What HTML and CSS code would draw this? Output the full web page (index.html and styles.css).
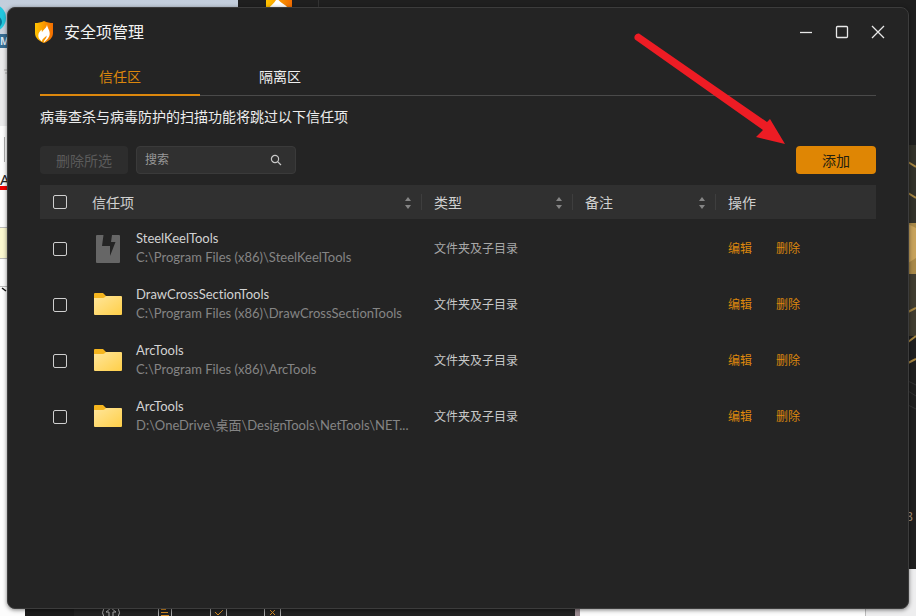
FILE: index.html
```html
<!DOCTYPE html>
<html lang="zh-CN">
<head>
<meta charset="utf-8">
<meta name="viewport" content="width=device-width, initial-scale=1">
<title>安全项管理</title>
<link rel="stylesheet" href="styles.css">
</head>
<body>
<svg class="desktop" viewBox="0 0 916 616" preserveAspectRatio="none" aria-hidden="true">
  <defs>
    <linearGradient id="flame-bg"><stop offset="0" stop-color="#ffc400"/><stop offset="1" stop-color="#f36c00"/></linearGradient>
    <linearGradient id="sky" x2="0" y2="1"><stop offset="0" stop-color="#c3cedc"/><stop offset="1" stop-color="#c9d2de"/></linearGradient>
  </defs>
  <rect width="916" height="616" fill="#fcfcfc"/>
  <rect width="240" height="34" fill="url(#sky)"/>
  <circle cx="-8" cy="18" r="14" fill="#22c7de"/>
  <circle cx="-4" cy="22" r="6" fill="#087a9c"/>
  <rect y="34" width="8" height="14" fill="#366c93"/>
  <text x="0" y="45" class="edge-label">ME</text>
  <rect y="48" width="8" height="78" fill="#eaeaeb"/>
  <path d="M4 70h4M5 73h3" stroke="#aaa"/>
  <path d="M4.500 137v25" stroke="#aaa"/>
  <text x="0" y="185" class="edge-letter">A</text>
  <rect y="186" width="8" height="4" fill="#f00000"/>
  <rect y="228" width="8" height="30" fill="#fbf8d0"/>
  <path d="M0 227.500h8M0 258.500h8M0 286.500h8" stroke="#bbb"/>
  <path d="M2 288l4 3" stroke="#111" stroke-width="1.500"/>
  <rect x="238" width="678" height="569" fill="#1f1f1f"/>
  <path d="M318.500 0v8" stroke="#333"/>
  <rect x="266" width="26" height="8" fill="url(#flame-bg)"/>
  <path d="M269 8c2-3 6-5 8-10 3 5 8 6 11 10z" fill="#fff"/>
  <g>
    <rect x="908" y="145" width="8" height="78" fill="#33322a"/>
    <rect x="908" y="223" width="8" height="51" fill="#a98949"/>
    <path d="M908 224l8 4v30l-8 5z" fill="#c7a25b"/>
    <rect x="908" y="274" width="8" height="62" fill="#403c30"/>
    <path d="M908 162l8 5M908 193l8 5M908 312l8-4M908 342l8-6M908 363l8-4" stroke="#a58542" stroke-width="2"/>
    <path d="M908 381l8 4M908 391l8 5M908 405l8 4" stroke="#343434"/>
    <text x="906" y="521" class="edge-digit">8</text>
  </g>
  <rect x="907" y="569" width="9" height="47" fill="#eeeeef"/>
  <rect x="25" y="606" width="550" height="10" fill="#1b1b1b"/>
  <rect x="74" y="606" width="501" height="10" fill="#222"/>
  <rect x="575" y="606" width="5" height="10" fill="#9b8b91"/>
  <rect x="865" y="606" width="51" height="10" fill="#eeeeef"/>
  <path d="M865.500 606v10" stroke="#bbb"/>
  <g fill="none" stroke="#a8a8a8">
    <path d="M104 608q-3 5 0 9M118 608q3 5 0 9M109 616v-4h-3l5-4 5 4h-3v4"/>
    <path d="M158.500 608v8M171.500 608v8M210.500 608v8M226.500 608v8M264.500 608v8M280.500 608v8"/>
    <path d="M161 609.500h5M161 612.500h7M161 615.500h8M215 612l3 3 5-5M270 610l5 5M275 610l-5 5" stroke="#d58c24"/>
  </g>
</svg>

<main class="window">
  <header class="titlebar">
    <svg class="logo" viewBox="0 0 20 24" aria-hidden="true">
      <path d="M10 1c3 1.600 6 2 9 2v10c0 5-4 8-9 10-5-2-9-5-9-10V3c3 0 6-.4 9-2z" fill="url(#flame-bg)"/>
      <path d="M13 4.500c0 3 2.700 5 2.700 9 0 4-2.700 6-6 9 .3-3 3.300-4 2.800-7-2 2.700-4.500 3-4.500 6C5.500 19.500 4.300 18 4.300 15.500c0-3 2-4.300 3.200-6 .3 1 .3 2 .5 2.700C9 9.500 12.700 8.500 13 4.500z" fill="#fff"/>
    </svg>
    <h1 class="title">安全项管理</h1>
    <div class="window-controls">
      <button type="button" class="control" aria-label="最小化"><svg viewBox="0 0 14 14"><path d="M1 7.500h12"/></svg></button>
      <button type="button" class="control" aria-label="最大化"><svg viewBox="0 0 14 14"><rect x="1.500" y="1.500" width="11" height="11" rx="1"/></svg></button>
      <button type="button" class="control" aria-label="关闭"><svg viewBox="0 0 14 14"><path d="M1 1l12 12M13 1L1 13"/></svg></button>
    </div>
  </header>

  <div class="content">
    <div class="tabs" role="tablist">
      <button type="button" class="tab tab-active" role="tab" aria-selected="true">信任区</button>
      <button type="button" class="tab" role="tab" aria-selected="false">隔离区</button>
    </div>
    <p class="description">病毒查杀与病毒防护的扫描功能将跳过以下信任项</p>

    <div class="toolbar">
      <button type="button" class="button button-muted" disabled>删除所选</button>
      <form class="search">
        <input class="search-input" type="text" placeholder="搜索" aria-label="搜索">
        <button type="submit" class="search-button" aria-label="搜索"><svg viewBox="0 0 12 12"><circle cx="5" cy="5" r="3.600"/><path d="M7.600 7.600l3.400 3.400"/></svg></button>
      </form>
      <button type="button" class="button button-primary">添加</button>
    </div>

    <table class="items">
      <colgroup><col class="col-check"><col><col class="col-type"><col class="col-note"><col class="col-actions"></colgroup>
      <thead>
        <tr>
          <th class="check-cell"><input type="checkbox" class="check" aria-label="全选"></th>
          <th><div class="heading">信任项<button type="button" class="sort" aria-label="排序"><svg viewBox="0 0 8 12"><path d="M4 0l3 4h-6zM4 12l3-4h-6z"/></svg></button></div></th>
          <th><div class="heading">类型<button type="button" class="sort" aria-label="排序"><svg viewBox="0 0 8 12"><path d="M4 0l3 4h-6zM4 12l3-4h-6z"/></svg></button></div></th>
          <th><div class="heading">备注<button type="button" class="sort" aria-label="排序"><svg viewBox="0 0 8 12"><path d="M4 0l3 4h-6zM4 12l3-4h-6z"/></svg></button></div></th>
          <th><div class="heading heading-last">操作</div></th>
        </tr>
      </thead>
      <tbody>
        <tr>
          <td class="check-cell"><input type="checkbox" class="check" aria-label="SteelKeelTools"></td>
          <td><div class="item"><svg class="item-icon" viewBox="0 0 32 32" aria-hidden="true"><path d="M5 2h6.500L10 13h8v10l5.500-14H19l1-7h7q1 0 1 1v26q0 1-1 1H5q-1 0-1-1V3q0-1 1-1z" fill="#666"/></svg>
            <div class="item-text"><div class="item-name">SteelKeelTools</div><div class="item-path">C:\Program Files (x86)\SteelKeelTools</div></div></div></td>
          <td class="type type-dim">文件夹及子目录</td><td></td>
          <td><div class="actions"><button type="button" class="action">编辑</button><button type="button" class="action">删除</button></div></td>
        </tr>
        <tr>
          <td class="check-cell"><input type="checkbox" class="check" aria-label="DrawCrossSectionTools"></td>
          <td><div class="item"><svg class="item-icon" viewBox="0 0 32 32" aria-hidden="true"><defs><linearGradient id="folder" x2="1" y2="1"><stop offset="0" stop-color="#ffe69b"/><stop offset="1" stop-color="#ffcf48"/></linearGradient></defs><path d="M3 4h8l3 3v4H2V5q0-1 1-1z" fill="#f5b51e"/><path d="M2 9h9q1 0 2-1l1-1h15q1 0 1 1v17q0 1-1 1H3q-1 0-1-1z" fill="url(#folder)"/></svg>
            <div class="item-text"><div class="item-name">DrawCrossSectionTools</div><div class="item-path">C:\Program Files (x86)\DrawCrossSectionTools</div></div></div></td>
          <td class="type">文件夹及子目录</td><td></td>
          <td><div class="actions"><button type="button" class="action">编辑</button><button type="button" class="action">删除</button></div></td>
        </tr>
        <tr>
          <td class="check-cell"><input type="checkbox" class="check" aria-label="ArcTools"></td>
          <td><div class="item"><svg class="item-icon" viewBox="0 0 32 32" aria-hidden="true"><path d="M3 4h8l3 3v4H2V5q0-1 1-1z" fill="#f5b51e"/><path d="M2 9h9q1 0 2-1l1-1h15q1 0 1 1v17q0 1-1 1H3q-1 0-1-1z" fill="url(#folder)"/></svg>
            <div class="item-text"><div class="item-name">ArcTools</div><div class="item-path">C:\Program Files (x86)\ArcTools</div></div></div></td>
          <td class="type">文件夹及子目录</td><td></td>
          <td><div class="actions"><button type="button" class="action">编辑</button><button type="button" class="action">删除</button></div></td>
        </tr>
        <tr>
          <td class="check-cell"><input type="checkbox" class="check" aria-label="ArcTools"></td>
          <td><div class="item"><svg class="item-icon" viewBox="0 0 32 32" aria-hidden="true"><path d="M3 4h8l3 3v4H2V5q0-1 1-1z" fill="#f5b51e"/><path d="M2 9h9q1 0 2-1l1-1h15q1 0 1 1v17q0 1-1 1H3q-1 0-1-1z" fill="url(#folder)"/></svg>
            <div class="item-text"><div class="item-name">ArcTools</div><div class="item-path">D:\OneDrive\桌面\DesignTools\NetTools\NET...</div></div></div></td>
          <td class="type">文件夹及子目录</td><td></td>
          <td><div class="actions"><button type="button" class="action">编辑</button><button type="button" class="action">删除</button></div></td>
        </tr>
      </tbody>
    </table>
  </div>

  <svg class="pointer" viewBox="0 0 156 116" aria-hidden="true"><path d="M10 3.500L138 92L141 89L156 114L127 107L134 100L6 9.500A4 4 0 0 1 10 3.500z" fill="#ed1c24"/></svg>
</main>
</body>
</html>
```
FILE: styles.css
```css
* { box-sizing: border-box; }

body {
  margin: 0;
  min-height: 100vh;
  display: flex;
  padding: 7px;
  background: #1f1f1f;
  color: #e6e6e6;
  font: 14px/20px "Noto Sans", "Noto Sans CJK SC", sans-serif;
}

button, input { font: inherit; color: inherit; margin: 0; padding: 0; }
button { border: 0; background: none; }

.desktop {
  position: absolute;
  inset: 0;
  width: 100%;
  height: 100%;
}
.edge-label { font-size: 10px; font-weight: 700; fill: #dce8f0; }
.edge-letter { font-size: 15px; fill: #222; }
.edge-digit { font-size: 12px; fill: #a8957c; }

.window {
  position: relative;
  flex: 1;
  min-width: 0;
  background: #242424;
  border: 1px solid #3c3c3c;
  border-radius: 8px;
  box-shadow: 0 1px 4px rgba(0, 0, 0, 0.5);
}

.titlebar {
  display: flex;
  align-items: center;
  height: 48px;
  padding: 0 12px 0 26px;
}
.logo { width: 20px; height: 24px; }
.title { margin: 0 0 0 10px; font-size: 16px; font-weight: 400; line-height: 24px; color: #f2f2f2; }
.window-controls { display: flex; margin-left: auto; }
.control { width: 36px; height: 32px; display: grid; place-items: center; }
.control svg { width: 14px; height: 14px; fill: none; stroke: #e8e8e8; stroke-width: 1.3; }

.content { padding: 2px 32px 32px; }

.tabs { display: flex; border-bottom: 1px solid #4a4a4a; }
.tab {
  width: 160px;
  height: 38px;
  margin-bottom: -1px;
  padding-top: 2px;
  border-bottom: 2px solid transparent;
  color: #f0f0f0;
}
.tab-active { color: #dc870d; border-color: #dc870d; }

.description { margin: 0; padding: 11px 0; color: #ededed; }

.toolbar { display: flex; gap: 8px; margin: 8px 0 11px; }
.button { height: 28px; padding-top: 2px; border-radius: 4px; }
.button-muted { width: 88px; background: #2d2d2d; color: #5b5b5b; }
.button-primary { width: 80px; margin-left: auto; background: #df8604; color: #24200f; }

.search {
  display: flex;
  width: 160px;
  height: 28px;
  background: #303030;
  border: 1px solid #3a3a3a;
  border-radius: 4px;
}
.search-input {
  flex: 1;
  min-width: 0;
  padding-left: 8px;
  border: 0;
  background: none;
  font-size: 12px;
  outline: none;
}
.search-input::placeholder { color: #989898; opacity: 1; }
.search-button { width: 38px; display: grid; place-items: center; }
.search-button svg { width: 12px; height: 12px; fill: none; stroke: #c8c8c8; stroke-width: 1.2; }

.items { width: 100%; table-layout: fixed; border-collapse: separate; border-spacing: 0; }
.col-check { width: 40px; }
.col-type { width: 151px; }
.col-note { width: 143px; }
.col-actions { width: 160px; }

th {
  height: 36px;
  padding: 0;
  background: #303030;
  background-clip: padding-box;
  border-bottom: 2px solid transparent;
  font-weight: 400;
  text-align: left;
  color: #d0d0d0;
}
td { height: 56px; padding: 0 12px; font-size: 12px; }
th.check-cell, td.check-cell { padding: 0; }

.heading {
  display: flex;
  justify-content: space-between;
  align-items: center;
  padding: 2px 9px 0 12px;
  height: 16px;
  border-right: 1px solid #3e3e3e;
}
.heading-last { border-right: 0; }
.sort { display: grid; width: 8px; height: 12px; }
.sort svg { width: 8px; height: 12px; fill: #858585; }

.check {
  appearance: none;
  display: block;
  width: 14px;
  height: 14px;
  margin: 0 auto;
  border: 1px solid #cfcfcf;
  border-radius: 2px;
}
.check:checked { background: #df8604; }

.item { display: flex; align-items: center; gap: 12px; }
.item-icon { flex: none; width: 32px; height: 32px; }
.item-text {
  min-width: 0;
  padding-bottom: 2px;
  font: 13px/19px Lato, "Noto Sans CJK SC", sans-serif;
  font-variant-ligatures: none;
}
.item-name { color: #d2d2d2; }
.item-path { color: #858585; white-space: nowrap; }
.type { color: #c8c8c8; }
.type-dim { color: #a8a8a8; }
.actions { display: flex; gap: 24px; }
.action { color: #dc870d; }

.pointer {
  position: absolute;
  top: 22px;
  right: 123px;
  width: 156px;
  height: 116px;
  pointer-events: none;
}
```
